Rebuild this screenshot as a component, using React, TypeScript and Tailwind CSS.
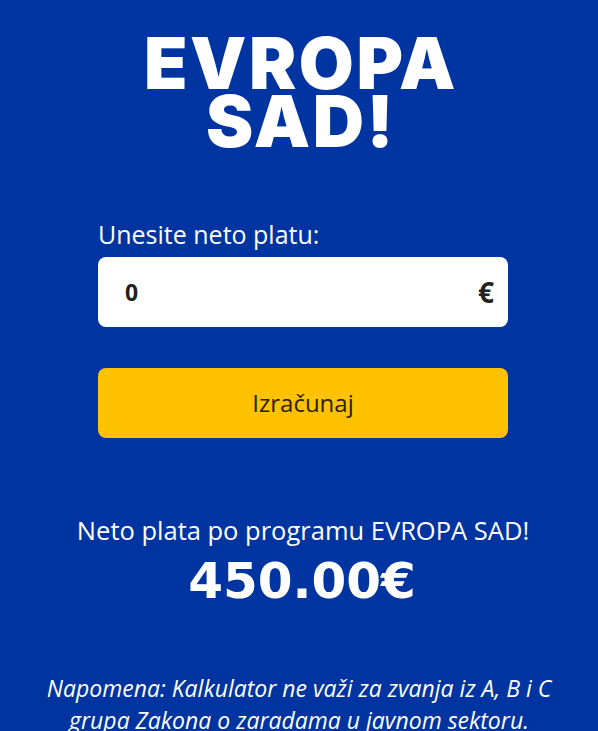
export default function App() {
  return (
    <div className="min-h-[731px] w-full overflow-hidden bg-[#0034a0] font-['Open_Sans',sans-serif] text-white">
      <div className="flex flex-col items-center pt-[30px]">
        {/* Title */}
        <h1 className="ml-[4px] text-center font-['Inter',sans-serif] text-[71px] font-black leading-[58px] tracking-[0.035em]">
          <span className="block pt-[4px]">EVROPA</span>
          <span className="block">SAD!</span>
        </h1>

        {/* Form */}
        <div className="ml-[8px] mt-[69px] flex w-[410px] flex-col">
          <label className="text-[25px] leading-[30px] text-white">Unesite neto platu:</label>
          <div className="mt-[8px] flex h-[70px] items-center justify-between rounded-lg bg-white pl-[27px] pr-[14px] text-[#222]">
            <span className="text-[23px] font-bold">0</span>
            <span className="text-[28px] font-bold">€</span>
          </div>
          <button className="mt-[41px] flex h-[70px] items-center justify-center rounded-lg bg-[#ffc200] text-[24px] text-[#2a2208]">
            Izračunaj
          </button>
        </div>

        {/* Result */}
        <p className="ml-[8px] mt-[76px] text-[25.5px] leading-[32px]">Neto plata po programu EVROPA SAD!</p>
        <p className="ml-[6px] mt-[7px] font-['DejaVu_Sans',sans-serif] text-[50px] font-bold leading-[56px]">450.00€</p>

        {/* Note */}
        <p className="mt-[63px] w-[560px] text-center text-[23px] italic leading-[32px]">
          Napomena: Kalkulator ne važi za zvanja iz A, B i C
          <br />
          grupa Zakona o zaradama u javnom sektoru.
        </p>
      </div>
    </div>
  );
}
